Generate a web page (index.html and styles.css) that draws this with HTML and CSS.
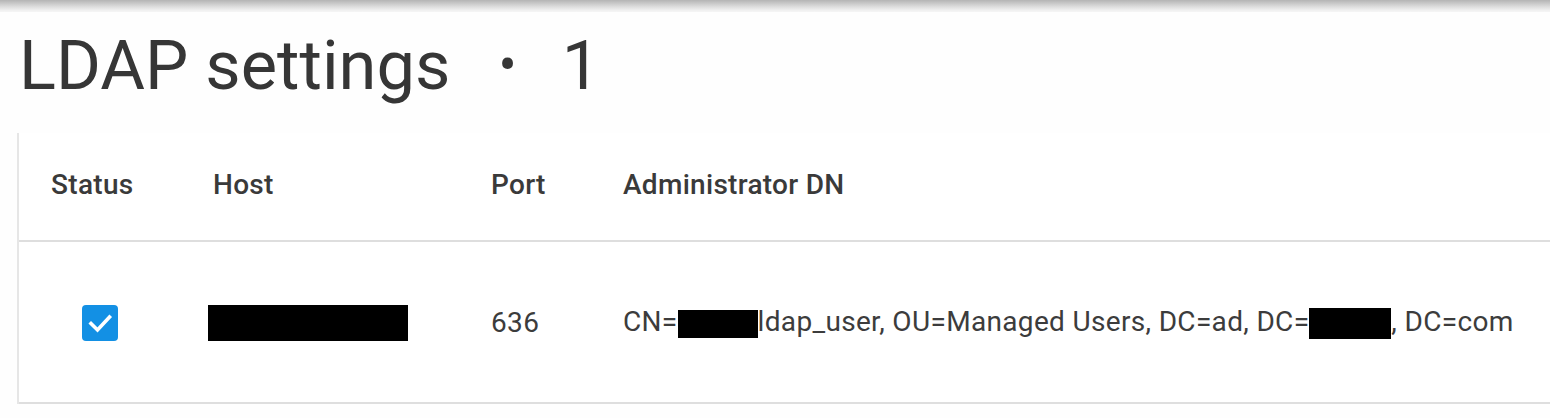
FILE: index.html
```html
<!DOCTYPE html>
<html>
<head>
<meta charset="utf-8">
<link rel="stylesheet" href="styles.css">
</head>
<body>
<div class="topshadow"></div>
<h1 class="title"><span>LDAP settings</span><span class="dot">•</span><span>1</span></h1>
<div class="card">
  <table class="grid">
    <thead>
      <tr>
        <th class="c-status">Status</th>
        <th class="c-host">Host</th>
        <th class="c-port">Port</th>
        <th class="c-dn">Administrator DN</th>
      </tr>
    </thead>
    <tbody>
      <tr>
        <td class="c-status center"><span class="check"><svg viewBox="0 0 36 36" width="36" height="36"><path d="M9 18.5 L15.5 25 L27.5 12" fill="none" stroke="#fff" stroke-width="3.6" stroke-linecap="square"/></svg></span></td>
        <td class="c-host"><span class="redact host-r"></span></td>
        <td class="c-port">636</td>
        <td class="c-dn">CN=<span class="redact cn-r"></span>ldap_user, OU=Managed Users, DC=ad, DC=<span class="redact dc-r"></span>, DC=com</td>
      </tr>
    </tbody>
  </table>
</div>
</body>
</html>
```
FILE: styles.css
```css
html, body {
  margin: 0;
  padding: 0;
  background: #fefefe;
}
body {
  font-family: Roboto, "Noto Sans", sans-serif;
  color: #3b3b3b;
  overflow: hidden;
}
.topshadow {
  height: 12px;
  background: linear-gradient(to bottom, #b4b4b4 0%, #dcdcdc 55%, #f0f0f0 85%, #f6f6f6 100%);
}
.title {
  margin: 0;
  padding: 13px 0 0 19px;
  height: 108px;
  box-sizing: border-box;
  font-weight: 400;
  font-size: 68.6px;
  line-height: 82px;
  color: #363636;
  white-space: nowrap;
}
.title .dot {
  font-size: 54px;
  margin: 0 45px 0 48px;
  position: relative;
  top: -6px;
}
.card {
  margin-top: 13px;
  margin-left: 17px;
  border-left: 2px solid #e6e6e6;
  background: #fff;
}
.grid {
  border-collapse: collapse;
  width: 100%;
  table-layout: fixed;
}
.grid th, .grid td {
  text-align: left;
  padding: 0 0 0 32px;
  font-size: 28px;
  white-space: nowrap;
}
.grid th {
  font-weight: 500;
  height: 103px;
  padding-bottom: 4px;
  border-bottom: 2px solid #dedede;
  color: #3a3a3a;
  letter-spacing: 0.3px;
}
.grid td {
  font-weight: 400;
  height: 160px;
  border-bottom: 2px solid #dedede;
  color: #3c3c3c;
  letter-spacing: 0.33px;
}
.c-status { width: 130px; }
.c-host { width: 246px; }
.c-port { width: 100px; }
.grid td.center {
  text-align: center;
  padding: 0;
}
.check {
  display: inline-block;
  width: 36px;
  height: 36px;
  background: #1390e4;
  border-radius: 4px;
  vertical-align: middle;
  position: relative;
  top: 1px;
}
.check svg { display: block; }
.redact {
  display: inline-block;
  background: #000;
  vertical-align: middle;
}
.host-r {
  width: 200px;
  height: 36px;
  margin-left: -5px;
  position: relative;
  top: 1px;
}
.cn-r {
  width: 80px;
  height: 28px;
}
.dc-r {
  width: 82px;
  height: 31px;
}
```
